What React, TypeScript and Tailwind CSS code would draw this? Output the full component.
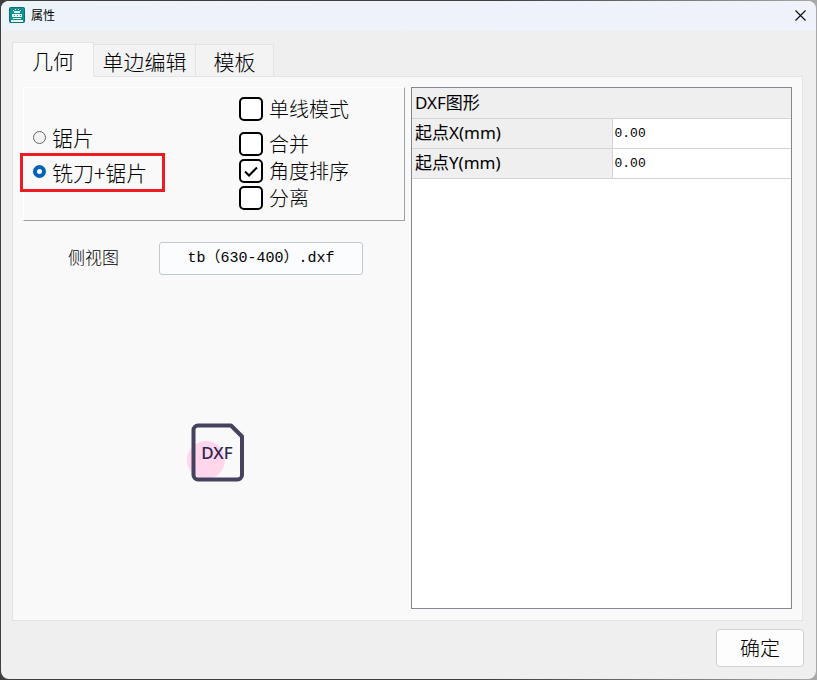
import { useState } from "react";

const tabs = [
    { id: "geometry", label: "几何", width: "w-[82px]" },
    { id: "edge", label: "单边编辑", width: "w-[102px]" },
    { id: "template", label: "模板", width: "w-[78px]" },
];

const options = [
    { id: "single", label: "单线模式" },
    { id: "merge", label: "合并" },
    { id: "angle", label: "角度排序" },
    { id: "split", label: "分离" },
];

function AppIcon() {
    return (
        <svg width="16" height="16" viewBox="0 0 16 16" aria-hidden="true">
            <rect x="0.5" y="0.5" width="15" height="15" rx="1" fill="#0f9393" stroke="#0b6f73" />
            <path d="M4 3h1v1H4zM6 2h1v1H6zM9 2h1v1H9zM11 3h1v1h-1zM5 4h6v2H5zM3 7h10v3H3zM4 11h8v1H4zM2 13h12v2H2z" fill="#e8f7f5" />
            <path d="M5 8h1v1H5zM8 8h1v1H8zM11 8h1v1h-1z" fill="#0f9393" />
        </svg>
    );
}

function DxfIcon() {
    return (
        <svg width="60" height="60" viewBox="0 0 60 60" role="img" aria-label="DXF">
            <circle cx="20" cy="38" r="19" fill="#ffd6ec" />
            <path
                d="M12 3.500H45L56 14.500V53a4.500 4.500 0 0 1-4.500 4.500H12a4.500 4.500 0 0 1-4.500-4.500V8a4.500 4.500 0 0 1 4.500-4.500z"
                fill="none"
                stroke="#45425f"
                strokeWidth="4"
                strokeLinejoin="round"
            />
            <text x="31" y="37" textAnchor="middle" fontSize="17" fill="#2b2850" className="font-['Noto_Sans',sans-serif] font-medium">
                DXF
            </text>
        </svg>
    );
}

export default function App() {
    const [tab, setTab] = useState("geometry");
    const [tool, setTool] = useState("mill");
    const [checked, setChecked] = useState<Record<string, boolean>>({ angle: true });
    const [start, setStart] = useState({ x: "0.00", y: "0.00" });

    const toggle = (id: string) => {
        setChecked({ ...checked, [id]: !checked[id] });
    };

    return (
        <div className="min-h-screen flex bg-linear-to-r from-[#3f3f41] from-60% to-[#a8a8a8] p-px font-['Noto_Sans_CJK_SC',sans-serif] text-black">
            <div className="flex-1 flex flex-col rounded-lg overflow-hidden bg-[#efefef]">
                <header className="h-[30px] flex items-center justify-between pl-2 pr-[10px] pb-[2px] bg-linear-to-r from-[#edf4f9] to-[#eff2fb]">
                    <div className="flex items-center gap-[6px]">
                        <AppIcon />
                        <h1 className="text-xs leading-4">属性</h1>
                    </div>
                    <button aria-label="关闭">
                        <svg width="11" height="11" viewBox="0 0 11 11" stroke="#111" strokeWidth="1.2">
                            <path d="M0.500 0.500l10 10M10.500 0.500l-10 10" />
                        </svg>
                    </button>
                </header>
                <main className="flex-1 flex flex-col px-3 pt-[11px] pb-3">
                    <div role="tablist" className="flex items-end pl-px -ml-[2px] -mb-px relative">
                        {tabs.map((t) => (
                            <button
                                key={t.id}
                                role="tab"
                                aria-selected={tab === t.id}
                                onClick={() => setTab(t.id)}
                                className={`${t.width} border border-[#e3e3e3] text-[21px] leading-6 font-light ${
                                    tab === t.id ? "h-[35px] bg-[#f9f9f9] border-b-[#f9f9f9]" : "h-[33px] bg-[#f3f3f3] border-l-0"
                                }`}
                            >
                                {t.label}
                            </button>
                        ))}
                    </div>
                    <section className="flex-1 grid grid-cols-[382fr_381fr] gap-[6px] -ml-px mr-px border border-[#e3e3e3] bg-[#f9f9f9] p-[10px] pb-[11px]">
                        <div className="min-w-0 flex flex-col">
                            <div className="h-[134px] flex border border-t-white border-l-white border-r-[#a0a0a0] border-b-[#a0a0a0]">
                                <div className="w-[215px] pt-[33px] text-[21px] leading-6 font-light">
                                    <label className="h-8 flex items-center gap-[6px] pl-[9px]">
                                        <input
                                            type="radio"
                                            name="tool"
                                            checked={tool === "saw"}
                                            onChange={() => setTool("saw")}
                                            className="appearance-none size-[13px] rounded-full border border-[#666] bg-[#f3f3f3] checked:border-4 checked:border-[#0560b8] checked:bg-white"
                                        />
                                        锯片
                                    </label>
                                    <label className="w-[145px] h-[39px] -ml-[4px] pb-[2px] flex items-center gap-[6px] pl-[10px] border-3 border-[#ed1c24]">
                                        <input
                                            type="radio"
                                            name="tool"
                                            checked={tool === "mill"}
                                            onChange={() => setTool("mill")}
                                            className="appearance-none size-[13px] rounded-full border border-[#666] bg-[#f3f3f3] checked:border-4 checked:border-[#0560b8] checked:bg-white"
                                        />
                                        铣刀+锯片
                                    </label>
                                </div>
                                <div className="pt-[7px] flex flex-col text-xl leading-6 font-light">
                                    {options.map((o) => (
                                        <label key={o.id} className="h-[27px] flex items-center gap-[6px] first:mb-2">
                                            <span className="relative size-6">
                                                <input
                                                    type="checkbox"
                                                    checked={!!checked[o.id]}
                                                    onChange={() => toggle(o.id)}
                                                    className="peer block appearance-none size-6 rounded-[5px] border-2 border-black bg-white"
                                                />
                                                <svg
                                                    viewBox="0 0 24 24"
                                                    className="hidden peer-checked:block absolute inset-0 pointer-events-none"
                                                    fill="none"
                                                    stroke="#000"
                                                    strokeWidth="2"
                                                >
                                                    <path d="M6 12.500l4 4L18 8.500" />
                                                </svg>
                                            </span>
                                            {o.label}
                                        </label>
                                    ))}
                                </div>
                            </div>
                            <div className="flex items-center gap-10 pt-[21px] pl-[45px]">
                                <span id="side-view" className="pb-[3px] text-[17px] leading-6 font-light">侧视图</span>
                                <button
                                    aria-describedby="side-view"
                                    className="w-[204px] h-[33px] pt-px rounded-[3px] border border-[#c2c8cf] bg-[#fbfcfe] font-['Liberation_Mono','Noto_Sans_CJK_SC',monospace] text-[15px] leading-5"
                                >
                                    tb（630-400）.dxf
                                </button>
                            </div>
                            <div className="flex-1 flex items-center justify-center pt-5 pl-1">
                                <DxfIcon />
                            </div>
                        </div>
                        <div className="min-w-0 border border-[#828790] bg-white">
                            <table className="w-full table-fixed border-collapse font-['Noto_Sans','Noto_Sans_CJK_SC',sans-serif] text-[17px] leading-6 text-left">
                                <colgroup>
                                    <col className="w-[200px]" />
                                    <col />
                                </colgroup>
                                <tbody>
                                    <tr className="h-[30px] border-b border-[#d4d4d4] bg-[#efefef]">
                                        <th colSpan={2} className="pl-[3px] font-normal">DXF图形</th>
                                    </tr>
                                    <tr className="h-[30px] border-b border-[#d4d4d4]">
                                        <th className="pl-[3px] font-normal bg-[#efefef] border-r border-[#d4d4d4]">
                                            <label htmlFor="start-x">起点X(mm)</label>
                                        </th>
                                        <td className="pl-[2px]">
                                            <input
                                                id="start-x"
                                                value={start.x}
                                                onChange={(e) => setStart({ ...start, x: e.target.value })}
                                                className="block w-full pt-[2px] font-['Liberation_Mono',monospace] text-[13px] leading-5"
                                            />
                                        </td>
                                    </tr>
                                    <tr className="h-[30px] border-b border-[#d4d4d4]">
                                        <th className="pl-[3px] font-normal bg-[#efefef] border-r border-[#d4d4d4]">
                                            <label htmlFor="start-y">起点Y(mm)</label>
                                        </th>
                                        <td className="pl-[2px]">
                                            <input
                                                id="start-y"
                                                value={start.y}
                                                onChange={(e) => setStart({ ...start, y: e.target.value })}
                                                className="block w-full pt-[2px] font-['Liberation_Mono',monospace] text-[13px] leading-5"
                                            />
                                        </td>
                                    </tr>
                                </tbody>
                            </table>
                        </div>
                    </section>
                    <footer className="flex justify-end pt-2">
                        <button className="w-[88px] h-[38px] rounded-[4px] border border-[#d0d0d0] bg-[#fdfdfd] text-xl leading-6 font-light">
                            确定
                        </button>
                    </footer>
                </main>
            </div>
        </div>
    );
}
